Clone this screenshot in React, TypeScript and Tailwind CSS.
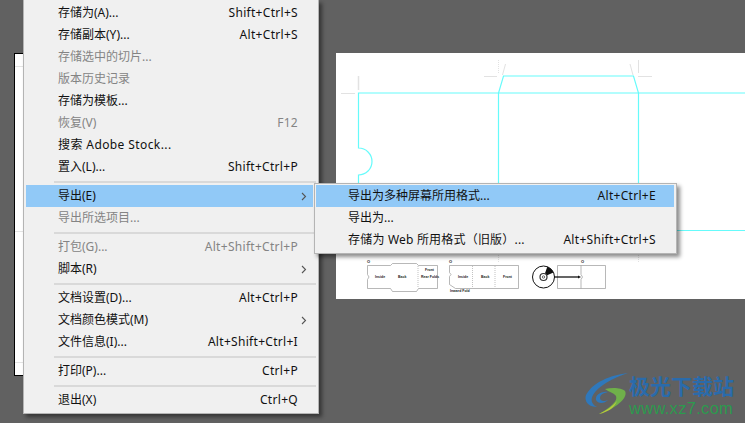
type Row =
  | { sep: true }
  | { sep?: false; label: string; keys?: string; off?: boolean; arrow?: boolean; active?: boolean; labelClass?: string };

const fileRows: Row[] = [
  { label: "存储为(A)...", keys: "Shift+Ctrl+S" },
  { label: "存储副本(Y)...", keys: "Alt+Ctrl+S" },
  { label: "存储选中的切片...", off: true },
  { label: "版本历史记录", off: true },
  { label: "存储为模板..." },
  { label: "恢复(V)", keys: "F12", off: true },
  { label: "搜索 Adobe Stock...", labelClass: "tracking-[0.4px]" },
  { label: "置入(L)...", keys: "Shift+Ctrl+P" },
  { sep: true },
  { label: "导出(E)", arrow: true, active: true },
  { label: "导出所选项目...", off: true },
  { sep: true },
  { label: "打包(G)...", keys: "Alt+Shift+Ctrl+P", off: true },
  { label: "脚本(R)", arrow: true },
  { sep: true },
  { label: "文档设置(D)...", keys: "Alt+Ctrl+P" },
  { label: "文档颜色模式(M)", arrow: true },
  { label: "文件信息(I)...", keys: "Alt+Shift+Ctrl+I" },
  { sep: true },
  { label: "打印(P)...", keys: "Ctrl+P" },
  { sep: true },
  { label: "退出(X)", keys: "Ctrl+Q" },
];

const exportRows: Row[] = [
  { label: "导出为多种屏幕所用格式...", keys: "Alt+Ctrl+E", active: true },
  { label: "导出为..." },
  { label: "存储为 Web 所用格式（旧版）...", keys: "Alt+Shift+Ctrl+S", labelClass: "tracking-[0.2px]" },
];

function MenuRows({ rows, rowPad }: { rows: Row[]; rowPad: string }) {
  return (
    <>
      {rows.map((row, i) =>
        row.sep ? (
          <div key={i} className="ml-[28px] -mr-[3px] mt-[3px] mb-[2px] h-[2px] bg-[#d9d9d9]" />
        ) : (
          <div
            key={i}
            className={`flex h-[22px] items-center pl-[32px] ${rowPad} ${row.active ? "bg-[#91c9f7]" : ""} ${row.off ? "text-[#848484]" : "text-[#111111]"}`}
          >
            <span className={`flex-1 whitespace-nowrap ${row.labelClass ?? ""}`}>{row.label}</span>
            {row.keys && <span className="whitespace-nowrap tracking-[0.3px]">{row.keys}</span>}
            {row.arrow && (
              <svg width="6" height="9" viewBox="0 0 6 9" className="-mr-[9px] fill-none stroke-[#555555]">
                <path d="M1 1l3.500 3.500L1 8" strokeWidth="1.100" />
              </svg>
            )}
          </div>
        ),
      )}
    </>
  );
}

function Artboard() {
  return (
    <svg width="409" height="246" viewBox="336 53 409 246" className="block">
      <g fill="none" stroke="#e2e2e2" strokeWidth="1">
        <path d="M341 93.500h14M484 76.500h13M638 76.500h14M638.500 60v13M505.500 64l-3 11M630 64l3 11" />
        <path d="M358.500 76v14" strokeWidth="1.500" />
        <path d="M498.500 60v14" strokeDasharray="1 1" />
        <path d="M498.500 255v8M638.500 255v8" strokeDasharray="1 1" />
      </g>
      <g fill="none" stroke="#66fbfb" strokeWidth="1.200">
        <path d="M358.500 183v-8a13.500 13.500 0 0 0 0-27V93H745" />
        <path d="M498.500 183V93l5-17h130l5 17V183" />
        <path d="M677 230.500h68" />
      </g>
      <g fill="#fff" stroke="#9a9a9a" strokeWidth="0.700">
        <path d="M367.500 265.500h23l2-2h24l2 2h19v23h-19l-2 3h-24l-2-3h-23v-9l1.500-2.500-1.500-2.500z" />
        <path d="M449.500 265.500h69v23h-63l-6-4v-8l1.500-2-1.500-2z" />
        <path d="M557.500 265.500h48v23h-48zM581 265.500v9l1.500 2.500-1.500 2.500v9" />
      </g>
      <path d="M472.500 266v22M495 266v22M418 266v22" stroke="#999" strokeWidth="0.600" strokeDasharray="1 1" />
      <g fontFamily="Liberation Sans, sans-serif" fontSize="3.500" fontWeight="700" fill="#222">
        <text x="375" y="277.500">Inside</text>
        <text x="398" y="277.500">Back</text>
        <text x="425" y="270.500">Front</text>
        <text x="421" y="277.500">Rear Folds</text>
        <text x="458" y="277.500">Inside</text>
        <text x="481" y="277.500">Back</text>
        <text x="503" y="277.500">Front</text>
        <text x="450" y="291.500">Inward Fold</text>
        <text x="367" y="262.500" fontSize="4">O</text>
        <text x="449" y="262.500" fontSize="4">O</text>
        <text x="581" y="262.500" fontSize="4">O</text>
      </g>
      <circle cx="543.500" cy="277" r="11" fill="#fff" stroke="#111" strokeWidth="1" />
      <path d="M545 273.200L547.300 266.700A11 11 0 0 1 553.500 272.400L547.100 275.300z" fill="#111" />
      <circle cx="543.500" cy="277" r="3.500" fill="none" stroke="#333" strokeWidth="1.200" />
      <circle cx="543.500" cy="277" r="1.200" fill="none" stroke="#333" strokeWidth="0.700" />
      <path d="M554 277h25" stroke="#111" strokeWidth="1.300" />
      <path d="M581 277l-3-1.500v3z" fill="#111" />
    </svg>
  );
}

function Watermark() {
  return (
    <div className="absolute left-[585px] top-[372px] flex items-start">
      <svg width="46" height="46" viewBox="0 0 46 46" className="shrink-0">
        <path d="M43 1C26 3 8 10 1 23c-2 6 2 12 11 12-5-2-7-7-4-12C13 14 28 6 43 1z" fill="#2f78bb" />
        <path d="M11 28c-1-5 5-9 12-8-5 1-8 3-8 6 0 3 4 4 8 2-4 4-10 4-12 0z" fill="#2f78bb" />
        <path d="M20 17c8-2 17-1 20 2 3 5-5 16-26 23 12-7 19-13 17-18-2-3-7-4-11-7z" fill="#6fb04a" />
        <path d="M14 42c8-4 14-8 18-13-3 7-9 11-18 13z" fill="#b9c93a" />
      </svg>
      <div className="-ml-[2px] flex flex-col font-['Noto_Sans_CJK_SC',sans-serif] leading-none">
        <span className="text-[21px] font-bold leading-[26px] text-[#2a6bab]">极光下载站</span>
        <span className="mt-[1px] font-['Liberation_Sans',sans-serif] text-[16.500px] leading-[18px] tracking-[0.3px] text-[#2c9a4e]">
          www.xz7.com
        </span>
      </div>
    </div>
  );
}

export default function App() {
  return (
    <div className="relative h-[423px] w-[745px] overflow-hidden bg-[#616161] font-['Noto_Sans','Noto_Sans_CJK_SC',sans-serif] text-[12px]">
      {/* left document, mostly behind the menu */}
      <div className="absolute left-[14px] top-[53px] flex h-[323px] w-[20px] flex-col border-b border-l border-t border-black bg-white pt-[12px]">
        <div className="h-px bg-[#e4e4e4]" />
        <div className="mt-[164px] h-px bg-[#e4e4e4]" />
        <div className="mt-[130px] h-px bg-[#e4e4e4]" />
      </div>

      <div className="absolute left-[336px] top-[53px] h-[246px] w-[409px] bg-white">
        <Artboard />
      </div>

      <Watermark />

      {/* file menu, top is cut off by the window */}
      <div className="absolute left-[23px] top-0 w-[296px] border-b border-l border-r border-[#b4b4b4] bg-[#f0f0f0] pb-[2px] pl-[2px] pr-[5px] pt-[2px] shadow-[3px_3px_4px_rgba(0,0,0,0.45)]">
        <MenuRows rows={fileRows} rowPad="pr-[15px]" />
      </div>

      {/* export submenu */}
      <div className="absolute left-[314px] top-[183px] w-[363px] border border-[#b4b4b4] bg-[#f0f0f0] pb-[2px] pl-px pr-[2px] pt-px shadow-[3px_3px_4px_rgba(0,0,0,0.45)]">
        <MenuRows rows={exportRows} rowPad="pr-[18px]" />
      </div>
    </div>
  );
}
